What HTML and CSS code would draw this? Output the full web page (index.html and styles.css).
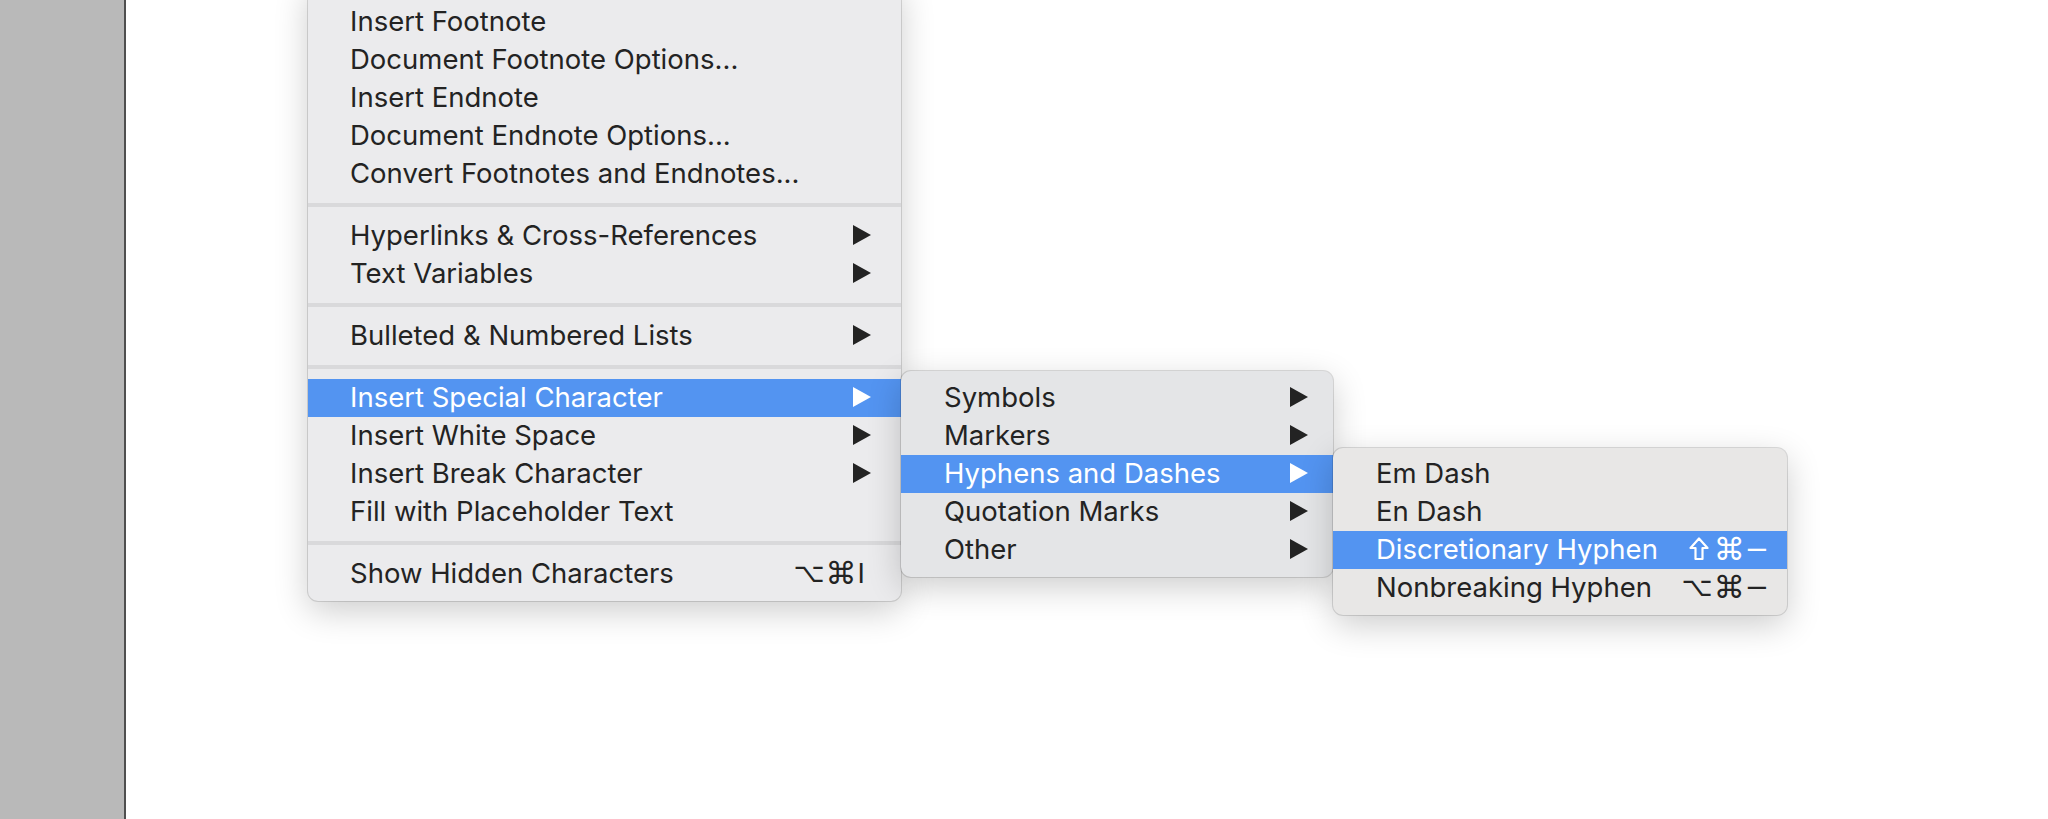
FILE: index.html
```html
<!DOCTYPE html>
<html lang="en">
<head>
<meta charset="utf-8">
<title>Type menu</title>
<link rel="stylesheet" href="styles.css">
</head>
<body>
<div class="page">
  <div class="gutter"></div>
  <div class="doc"></div>
</div>

<div class="menu menu-main">
  <div class="item"><span class="label">Insert Footnote</span></div>
  <div class="item"><span class="label">Document Footnote Options...</span></div>
  <div class="item"><span class="label">Insert Endnote</span></div>
  <div class="item"><span class="label">Document Endnote Options...</span></div>
  <div class="item"><span class="label">Convert Footnotes and Endnotes...</span></div>
  <div class="sep"></div>
  <div class="item"><span class="label">Hyperlinks &amp; Cross-References</span><svg class="arrow" viewBox="0 0 18 20"><path d="M0 0L18 10L0 20Z"/></svg></div>
  <div class="item"><span class="label">Text Variables</span><svg class="arrow" viewBox="0 0 18 20"><path d="M0 0L18 10L0 20Z"/></svg></div>
  <div class="sep"></div>
  <div class="item"><span class="label">Bulleted &amp; Numbered Lists</span><svg class="arrow" viewBox="0 0 18 20"><path d="M0 0L18 10L0 20Z"/></svg></div>
  <div class="sep"></div>
  <div class="item active"><span class="label">Insert Special Character</span><svg class="arrow" viewBox="0 0 18 20"><path d="M0 0L18 10L0 20Z"/></svg></div>
  <div class="item"><span class="label">Insert White Space</span><svg class="arrow" viewBox="0 0 18 20"><path d="M0 0L18 10L0 20Z"/></svg></div>
  <div class="item"><span class="label">Insert Break Character</span><svg class="arrow" viewBox="0 0 18 20"><path d="M0 0L18 10L0 20Z"/></svg></div>
  <div class="item"><span class="label">Fill with Placeholder Text</span></div>
  <div class="sep"></div>
  <div class="item item-keys"><span class="label">Show Hidden Characters</span><span class="keys"><span class="k k-opt">⌥</span><span class="k">⌘</span><span class="k k-i">I</span></span></div>
</div>

<div class="menu menu-sub1">
  <div class="item"><span class="label">Symbols</span><svg class="arrow" viewBox="0 0 18 20"><path d="M0 0L18 10L0 20Z"/></svg></div>
  <div class="item"><span class="label">Markers</span><svg class="arrow" viewBox="0 0 18 20"><path d="M0 0L18 10L0 20Z"/></svg></div>
  <div class="item active"><span class="label">Hyphens and Dashes</span><svg class="arrow" viewBox="0 0 18 20"><path d="M0 0L18 10L0 20Z"/></svg></div>
  <div class="item"><span class="label">Quotation Marks</span><svg class="arrow" viewBox="0 0 18 20"><path d="M0 0L18 10L0 20Z"/></svg></div>
  <div class="item"><span class="label">Other</span><svg class="arrow" viewBox="0 0 18 20"><path d="M0 0L18 10L0 20Z"/></svg></div>
</div>

<div class="menu menu-sub2">
  <div class="item"><span class="label">Em Dash</span></div>
  <div class="item"><span class="label">En Dash</span></div>
  <div class="item active"><span class="label">Discretionary Hyphen</span><span class="keys"><svg class="shift" viewBox="0 0 20 24" aria-label="Shift"><path d="M10 1.5L18.5 11H13.5V22H6.5V11H1.5Z"/></svg><span class="k">⌘</span><span class="k k-minus">−</span></span></div>
  <div class="item"><span class="label">Nonbreaking Hyphen</span><span class="keys"><span class="k k-opt">⌥</span><span class="k">⌘</span><span class="k k-minus">−</span></span></div>
</div>
</body>
</html>
```

FILE: styles.css
```css
html, body {
  margin: 0;
  padding: 0;
  height: 100%;
  overflow: hidden;
}

body {
  position: relative;
  background: #ffffff;
  font-family: "Inter", "Liberation Sans", sans-serif;
  color: #232323;
}

.page {
  display: flex;
  height: 100%;
}

.gutter {
  width: 124px;
  flex: none;
  background: #b9b9b9;
  border-right: 2px solid #4f4f4f;
}

.doc {
  flex: 1;
  background: #ffffff;
}

.menu {
  position: absolute;
  box-sizing: border-box;
  border-radius: 10px;
  box-shadow: 0 0 0 1px rgba(0, 0, 0, 0.13), 0 10px 34px rgba(0, 0, 0, 0.2);
  overflow: hidden;
}

.menu-main {
  left: 308px;
  top: -20px;
  width: 593px;
  padding: 23px 0 8px;
  background: #ebebed;
}

.menu-sub1 {
  left: 901px;
  top: 371px;
  width: 432px;
  padding: 8px 0;
  background: #e4e5e7;
}

.menu-sub2 {
  left: 1333px;
  top: 448px;
  width: 454px;
  padding: 7px 0 8px;
  background: #e8e7e6;
}

.item {
  box-sizing: border-box;
  display: flex;
  align-items: center;
  height: 38px;
  padding: 0 30px 2px 42px;
  font-size: 27.5px;
  line-height: 36px;
  white-space: nowrap;
}

.menu-sub1 .item {
  padding: 0 25px 2px 43px;
}

.menu-sub2 .item {
  padding: 0 18px 2px 43px;
}

.menu-main .item-keys {
  padding-right: 36px;
}

.item.active {
  background: #5394f1;
  color: #ffffff;
}

.label {
  flex: 1;
}

.arrow {
  width: 18px;
  height: 20px;
  fill: currentColor;
  flex: none;
}

.sep {
  height: 4px;
  margin: 10px 0;
  background: #d9d9db;
}

.keys {
  display: flex;
  align-items: center;
  gap: 0;
  font-family: "DejaVu Sans", sans-serif;
  font-size: 31px;
  line-height: 36px;
}

.k {
  display: inline-block;
}

.k-opt {
  font-size: 27px;
  margin-right: 1px;
}

.shift {
  width: 20px;
  height: 24px;
  margin-right: 5px;
  fill: none;
  stroke: currentColor;
  stroke-width: 2.2;
  stroke-linejoin: round;
  flex: none;
}

.k-i {
  margin-left: 1px;
  font-family: "Inter", "Liberation Sans", sans-serif;
  font-size: 27.5px;
}

.k-minus {
  font-size: 29px;
}
```
